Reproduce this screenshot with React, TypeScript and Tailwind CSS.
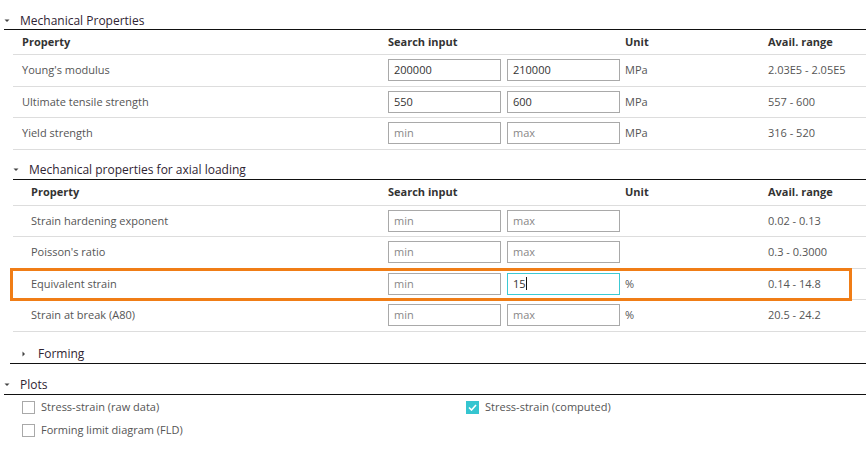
const font = { fontFamily: '"Open Sans", "Noto Sans", sans-serif' }

type Row = { name: string; min?: string; max?: string; unit: string; range: string; focus?: boolean; highlight?: boolean }

const mechanical: Row[] = [
  { name: "Young's modulus", min: "200000", max: "210000", unit: "MPa", range: "2.03E5 - 2.05E5" },
  { name: "Ultimate tensile strength", min: "550", max: "600", unit: "MPa", range: "557 - 600" },
  { name: "Yield strength", unit: "MPa", range: "316 - 520" },
]

const axial: Row[] = [
  { name: "Strain hardening exponent", unit: "", range: "0.02 - 0.13" },
  { name: "Poisson's ratio", unit: "", range: "0.3 - 0.3000" },
  { name: "Equivalent strain", max: "15", unit: "%", range: "0.14 - 14.8", focus: true, highlight: true },
  { name: "Strain at break (A80)", unit: "%", range: "20.5 - 24.2" },
]

function Caret({ open }: { open: boolean }) {
  return open ? (
    <svg width="6" height="4" viewBox="0 0 6 4" className="shrink-0">
      <path d="M0.5 0.5 L5.5 0.5 L3 3 Z" fill="#444" />
    </svg>
  ) : (
    <svg width="4" height="6" viewBox="0 0 4 6" className="shrink-0">
      <path d="M0.5 0.5 L3 3 L0.5 5.5 Z" fill="#444" />
    </svg>
  )
}

function SectionHeader({ title, open }: { title: string; open: boolean }) {
  return (
    <div className="flex items-center h-[20px] pt-[2px] border-b border-[#111]">
      <Caret open={open} />
      <span className="ml-[10px] text-[12px] text-[#2f2433]">{title}</span>
    </div>
  )
}

function Field({ value, placeholder, focus }: { value?: string; placeholder: string; focus?: boolean }) {
  return (
    <div
      className={`w-[113px] h-[22px] border flex items-center px-[5px] text-[11px] ${
        focus ? "border-[#3cc9d3]" : "border-[#a9a9a9]"
      }`}
    >
      {value ? (
        <span className="text-[#333]">{value}</span>
      ) : (
        <span className="text-[#888]">{placeholder}</span>
      )}
      {focus && <span className="w-px h-[13px] bg-[#111]" />}
    </div>
  )
}

function Table({ rows, pad, head }: { rows: Row[]; pad: string; head: string }) {
  return (
    <div className="ml-[13px] text-[11px]">
      <div className={`flex items-center ${head} border-b border-[#ddd] font-bold text-[#333]`}>
        <div className={`w-[375px] ${pad}`}>Property</div>
        <div className="w-[237px]">Search input</div>
        <div className="w-[143px]">Unit</div>
        <div>Avail. range</div>
      </div>
      {rows.map((r) => (
        <div key={r.name} className="relative flex items-center h-[31.5px] border-b border-[#ddd] text-[#555]">
          {r.highlight && (
            <div className="absolute left-[-3px] right-[14px] top-[-1px] bottom-[-2px] border-[3px] border-[#f07d16] pointer-events-none" />
          )}
          <div className={`w-[375px] ${pad}`}>{r.name}</div>
          <div className="w-[119px]">
            <Field value={r.min} placeholder="min" />
          </div>
          <div className="w-[118px]">
            <Field value={r.max} placeholder="max" focus={r.focus} />
          </div>
          <div className="w-[143px]">{r.unit}</div>
          <div>{r.range}</div>
        </div>
      ))}
    </div>
  )
}

function Check({ label, checked }: { label: string; checked?: boolean }) {
  return (
    <div className="flex items-center h-[23px] text-[11px] text-[#555]">
      {checked ? (
        <span className="w-[13px] h-[13px] bg-[#35c5d0] flex items-center justify-center">
          <svg width="9" height="7" viewBox="0 0 9 7">
            <path d="M1 3.5 L3.5 6 L8 1" stroke="#fff" strokeWidth="1.6" fill="none" />
          </svg>
        </span>
      ) : (
        <span className="w-[13px] h-[13px] border border-[#a9a9a9] bg-white" />
      )}
      <span className="ml-[6px]">{label}</span>
    </div>
  )
}

export default function App() {
  return (
    <div className="w-[866px] h-[456px] bg-white overflow-hidden" style={font}>
      <div className="pt-[10px]">
        <div className="pl-[4px]">
          <SectionHeader title="Mechanical Properties" open />
        </div>
        <Table rows={mechanical} pad="pl-[9px]" head="h-[25px]" />
      </div>

      <div className="pt-[10px]">
        <div className="pl-[13px]">
          <SectionHeader title="Mechanical properties for axial loading" open />
        </div>
        <Table rows={axial} pad="pl-[18px]" head="h-[26px]" />
      </div>

      <div className="pt-[12px] pl-[10px]">
        <div className="flex items-center h-[20px] pt-[2px] border-b border-[#111] pl-[12px]">
          <Caret open={false} />
          <span className="ml-[12px] text-[12px] text-[#2f2433]">Forming</span>
        </div>
      </div>

      <div className="pt-[11px]">
        <div className="pl-[4px]">
          <SectionHeader title="Plots" open />
        </div>
        <div className="grid grid-cols-[444px_1fr] pl-[22px] pt-[1px]">
          <div>
            <Check label="Stress-strain (raw data)" />
            <Check label="Forming limit diagram (FLD)" />
          </div>
          <div>
            <Check label="Stress-strain (computed)" checked />
          </div>
        </div>
      </div>
    </div>
  )
}
